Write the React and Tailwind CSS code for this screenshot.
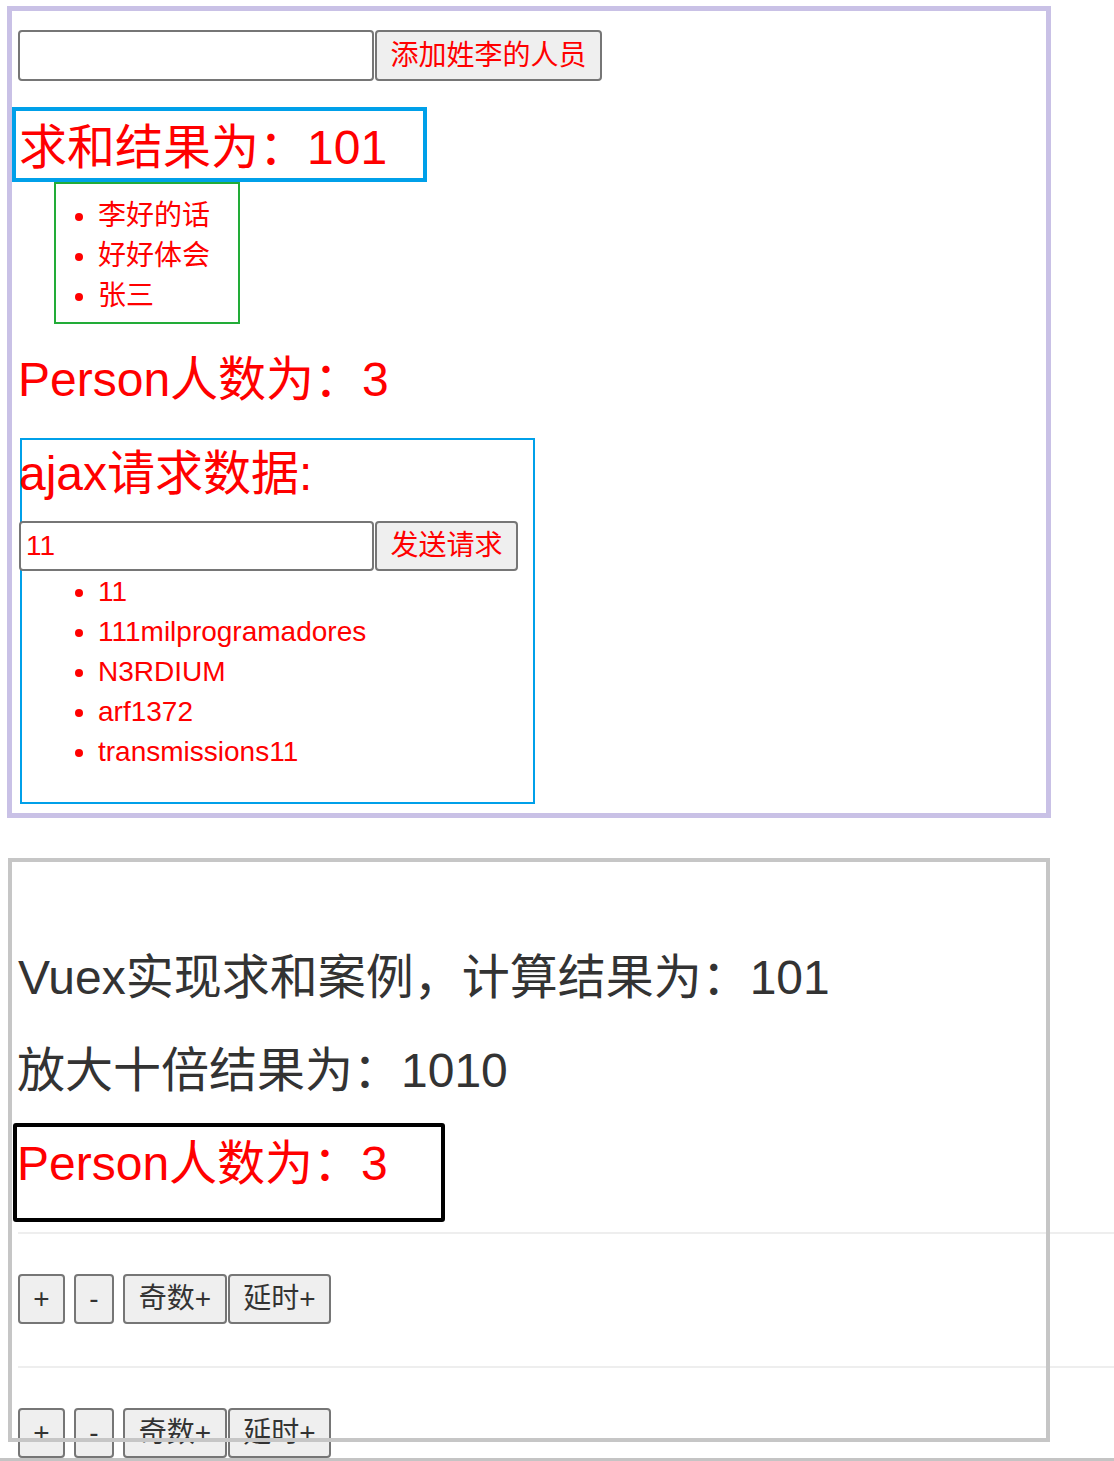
import React from "react";

function Btn({ w, children, className = "" }) {
  return (
    <button
      className={
        "h-[50px] shrink-0 border-2 border-[#767676] rounded-[4px] bg-[#efefef] text-[28px] leading-none text-[#333333] " +
        w +
        " " +
        className
      }
    >
      {children}
    </button>
  );
}

function BtnRow({ className = "" }) {
  return (
    <div className={"flex ml-[6px] h-[50px] " + className}>
      <Btn w="w-[47px]">+</Btn>
      <Btn w="w-[40px]" className="ml-[9px]">-</Btn>
      <Btn w="w-[104px]" className="ml-[9px]">奇数+</Btn>
      <Btn w="w-[103px]" className="ml-[1px]">延时+</Btn>
    </div>
  );
}

export default function App() {
  return (
    <div className="font-['Liberation_Sans','Noto_Sans_CJK_SC',sans-serif] w-[1114px] h-[1461px] overflow-hidden bg-white flex flex-col items-start">
      {/* Section 1 */}
      <div className="ml-[7px] mt-[6px] w-[1044px] h-[812px] shrink-0 border-[5px] border-[#c9c1e6] text-[#ff0000] flex flex-col items-start">
        <div className="flex ml-[6px] mt-[19px] h-[51px]">
          <input className="w-[356px] h-[51px] border-2 border-[#767676] rounded-[4px] bg-white" />
          <button className="ml-[1px] w-[227px] h-[51px] border-2 border-[#767676] rounded-[4px] bg-[#efefef] text-[28px] leading-none text-[#ff0000]">
            添加姓李的人员
          </button>
        </div>
        <div className="mt-[26px] w-[415px] h-[75px] border-4 border-[#00a0e9] pl-[3px] pt-[9px] text-[48px] leading-[56px] whitespace-nowrap">
          求和结果为：101
        </div>
        <ul className="ml-[42px] w-[186px] h-[142px] border-2 border-[#22ac38] pl-[42px] pt-[12px] list-disc text-[28px] leading-[40px]">
          <li>李好的话</li>
          <li>好好体会</li>
          <li>张三</li>
        </ul>
        <div className="ml-[6px] mt-[28px] h-[56px] text-[48px] leading-[56px] whitespace-nowrap">
          Person人数为：3
        </div>
        <div className="ml-[8px] mt-[30px] w-[515px] h-[366px] border-2 border-[#00a0e9] flex flex-col items-start">
          <div className="-ml-[3px] mt-[6px] h-[56px] text-[48px] leading-[56px] whitespace-nowrap">
            ajax请求数据:
          </div>
          <div className="flex -ml-[3px] mt-[19px] h-[50px]">
            <input
              readOnly
              value="11"
              className="w-[355px] h-[50px] border-2 border-[#767676] rounded-[4px] bg-white pl-[5px] text-[28px] text-[#ff0000] outline-none"
            />
            <button className="ml-[1px] w-[143px] h-[50px] border-2 border-[#767676] rounded-[4px] bg-[#efefef] text-[28px] leading-none text-[#ff0000]">
              发送请求
            </button>
          </div>
          <ul className="mt-[1px] pl-[76px] list-disc text-[28px] leading-[40px]">
            <li>11</li>
            <li>111milprogramadores</li>
            <li>N3RDIUM</li>
            <li>arf1372</li>
            <li>transmissions11</li>
          </ul>
        </div>
      </div>

      {/* Section 2 */}
      <div className="ml-[12px] mt-[44px] w-[1034px] h-[576px] shrink-0 outline-4 outline-[#c6c6c6] text-[#333333] flex flex-col items-start">
        <div className="ml-[6px] mt-[88px] h-[56px] text-[48px] leading-[56px] whitespace-nowrap">
          Vuex实现求和案例，计算结果为：101
        </div>
        <div className="ml-[5px] mt-[37px] h-[56px] text-[48px] leading-[56px] whitespace-nowrap">
          放大十倍结果为：1010
        </div>
        <div className="ml-[1px] mt-[24px] w-[432px] h-[99px] shrink-0 border-4 border-black rounded-[3px] pt-[9px] text-[48px] leading-[56px] text-[#ff0000] whitespace-nowrap">
          Person人数为：3
        </div>
        <div className="ml-[6px] mt-[10px] w-[1096px] h-[2px] shrink-0 bg-[#eeeeee]" />
        <BtnRow className="mt-[40px]" />
        <div className="ml-[6px] mt-[42px] w-[1096px] h-[2px] shrink-0 bg-[#eeeeee]" />
        <BtnRow className="mt-[40px]" />
      </div>

      <div className="mt-[20px] w-full h-[3px] shrink-0 bg-[#c4c4c4]" />
    </div>
  );
}
